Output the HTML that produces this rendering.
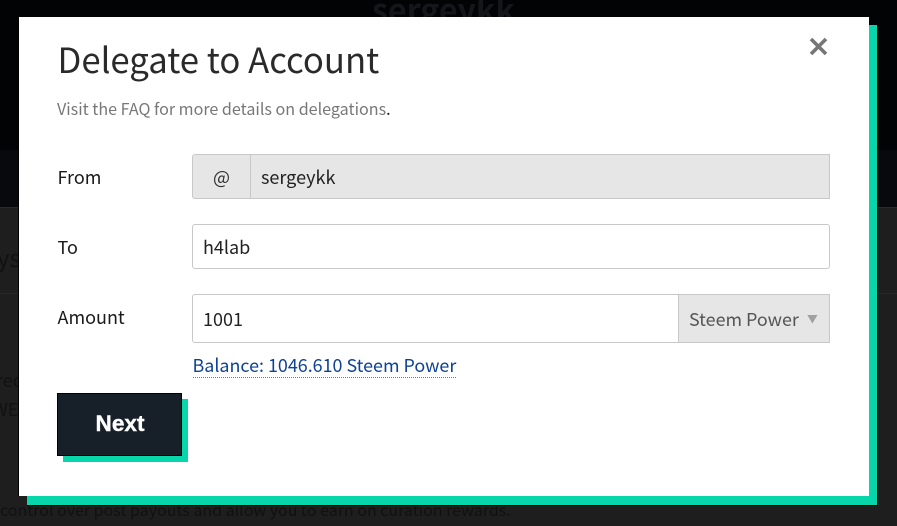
<!DOCTYPE html>
<html>
<head>
<meta charset="utf-8">
<style>
html,body{margin:0;padding:0;width:897px;height:526px;overflow:hidden;background:#1e1e1e;}
body{position:relative;font-family:"Noto Sans CJK JP","Liberation Sans",sans-serif;}
div,a,span{position:absolute;box-sizing:border-box;white-space:nowrap;}
.t{line-height:24px;height:24px;font-size:18px;color:#1a1a1a;}
.box{border:1px solid #c8c8c8;}
</style>
</head>
<body>
<div style="left:0;top:0;width:897px;height:150px;background:#020304"></div>
<div style="left:0;top:150px;width:897px;height:58px;background:#08090c"></div>
<div style="left:0;top:207px;width:897px;height:1px;background:#2a2a2a"></div>
<div style="left:0;top:293px;width:897px;height:1px;background:#262626"></div>
<div style="left:372px;top:-13px;font-size:32.2px;line-height:44px;font-weight:700;color:#14161a">sergeykk</div>
<div class="t" style="left:-3px;top:245px;color:#111;font-size:24px">ys</div>
<div class="t" style="left:-4px;top:368px;color:#111">red</div>
<div class="t" style="left:-8px;top:397px;color:#111">WER</div>
<div class="t" style="left:0;top:497px;color:#111;font-size:16px">control over post payouts and allow you to earn on curation rewards.</div>

<div style="left:27px;top:25px;width:851px;height:481px;background:#06d6a9;border-right:1px solid #000;border-bottom:1px solid #000"></div>
<div style="left:18px;top:17px;width:851px;height:479px;background:#fff;border-left:1px solid #000"></div>

<div style="left:57.5px;top:34px;height:48px;line-height:48px;font-size:34.7px;color:#2a2a2a">Delegate to Account</div>
<div style="left:57px;top:95.5px;height:24px;line-height:24px;font-size:16.1px;color:#777">Visit the FAQ for more details on delegations<span style="position:static;color:#222">.</span></div>

<svg style="position:absolute;left:809px;top:37px" width="19" height="19" viewBox="0 0 19 19"><path d="M2 2 L17 17 M17 2 L2 17" stroke="#767676" stroke-width="3.6" fill="none"/></svg>

<div class="t" style="left:57.5px;top:165px">From</div>
<div class="box" style="left:192px;top:154px;width:638px;height:45px;background:#e6e6e6;border-radius:3px 0 0 3px"></div>
<div style="left:250px;top:155px;width:1px;height:43px;background:#c8c8c8"></div>
<div class="t" style="left:213px;top:165px;color:#333">@</div>
<div class="t" style="left:261px;top:165px;color:#222">sergeykk</div>

<div class="t" style="left:57.5px;top:235px">To</div>
<div class="box" style="left:192px;top:224px;width:638px;height:45px;background:#fff;border-radius:3px"></div>
<div class="t" style="left:203px;top:235px;color:#222">h4lab</div>

<div class="t" style="left:57.5px;top:305px">Amount</div>
<div class="box" style="left:192px;top:294px;width:487px;height:49px;background:#fff;border-radius:3px 0 0 3px;border-right:0"></div>
<div class="box" style="left:678px;top:294px;width:152px;height:49px;background:#e6e6e6"></div>
<div class="t" style="left:203px;top:307px;color:#222">1001</div>
<div class="t" style="left:689px;top:307px;color:#555;font-size:17.9px">Steem Power</div>
<svg style="position:absolute;left:807px;top:315px" width="11" height="9" viewBox="0 0 11 9"><path d="M0.3 0 H10.5 L5.4 8.5 Z" fill="#a0a0a0"/></svg>

<div style="left:192.5px;top:353px;height:25px;line-height:24px;font-size:17.9px;color:#0f4295;border-bottom:1px dotted #777">Balance: 1046.610 Steem Power</div>

<div style="left:63px;top:399px;width:125px;height:63px;background:#06d6a9"></div>
<div style="left:57px;top:393px;width:125px;height:63px;background:#171f28;border:1px solid #000"></div>
<div style="left:57px;top:393px;width:126px;height:61px;line-height:61px;text-align:center;font-family:'Liberation Sans',sans-serif;font-weight:700;font-size:22.6px;color:#fff;-webkit-text-stroke:.4px #fff">Next</div>
</body>
</html>
